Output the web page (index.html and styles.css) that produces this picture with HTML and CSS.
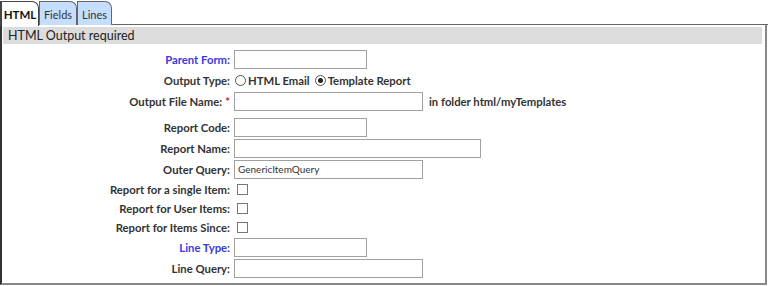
FILE: index.html
```html
<!DOCTYPE html>
<html>
<head>
<meta charset="utf-8">
<link rel="stylesheet" href="styles.css">
</head>
<body>
<div class="tabs">
  <div class="tab active">HTML</div>
  <div class="tab">Fields</div>
  <div class="tab">Lines</div>
</div>
<div class="panel">
  <div class="panel-head">HTML Output required</div>
  <div class="form">
    <label class="lbl blue">Parent Form:</label>
    <div class="fld"><span class="inp w132"></span></div>

    <label class="lbl">Output Type:</label>
    <div class="fld radios">
      <span class="radio"></span><span class="rtext">HTML Email</span>
      <span class="radio on"></span><span class="rtext">Template Report</span>
    </div>

    <label class="lbl">Output File Name: <span class="req">*</span></label>
    <div class="fld"><span class="inp w188"></span><span class="note">in folder html/myTemplates</span></div>

    <div class="spacer"></div><div class="spacer"></div>

    <label class="lbl">Report Code:</label>
    <div class="fld"><span class="inp w132"></span></div>

    <label class="lbl">Report Name:</label>
    <div class="fld"><span class="inp w246"></span></div>

    <label class="lbl">Outer Query:</label>
    <div class="fld"><span class="inp w188 val">GenericItemQuery</span></div>

    <label class="lbl">Report for a single Item:</label>
    <div class="fld chk-row"><span class="chk"></span></div>

    <label class="lbl">Report for User Items:</label>
    <div class="fld chk-row"><span class="chk"></span></div>

    <label class="lbl">Report for Items Since:</label>
    <div class="fld chk-row"><span class="chk"></span></div>

    <label class="lbl blue">Line Type:</label>
    <div class="fld"><span class="inp w132"></span></div>

    <label class="lbl">Line Query:</label>
    <div class="fld"><span class="inp w188"></span></div>
  </div>
</div>
</body>
</html>
```
FILE: styles.css
```css
html, body {
  margin: 0;
  padding: 0;
  background: #fff;
}
body {
  font-family: Lato, "Open Sans", sans-serif;
  color: #333;
  width: 768px;
  height: 286px;
  overflow: hidden;
}
.tabs {
  display: flex;
  height: 25px;
  padding-top: 1px;
  box-sizing: border-box;
  border-bottom: 1px solid #666;
}
.tab {
  box-sizing: border-box;
  height: 24px;
  padding: 0;
  text-align: center;
  border: 1px solid #666;
  border-bottom: none;
  border-radius: 0 7px 0 0;
  background: #c6defd;
  font-size: 11px;
  line-height: 25px;
  color: #333;
}
.tab.active {
  background: #fff;
  font-weight: bold;
  color: #111;
  height: 25px;
  margin-bottom: -1px;
  width: 39px;
  border-color: #444;
  border-left-width: 2px;
  font-size: 11.5px;
}
.tab:nth-child(2) { width: 38px; }
.tab:nth-child(3) { width: 35px; }
.panel {
  box-sizing: border-box;
  width: 767px;
  height: 260px;
  border-left: 2px solid #333;
  border-right: 2px solid #888;
  border-bottom: 2px solid #888;
  padding: 2px 2px 0 1px;
}
.panel-head {
  background: #dcdcdc;
  height: 17px;
  line-height: 17px;
  font-size: 12.5px;
  padding-left: 5px;
  color: #222;
  margin-right: 1px;
}
.form {
  display: grid;
  grid-template-columns: 227px 1fr;
  column-gap: 4px;
  padding-top: 5px;
}
.lbl {
  text-align: right;
  font-weight: bold;
  font-size: 11.3px;
  color: #333;
  display: flex;
  align-items: center;
  justify-content: flex-end;
  white-space: nowrap;
}
.lbl.blue { color: #3a3ae0; }
.req { color: #e02020; margin-left: 3px; }
.fld {
  display: flex;
  align-items: center;
  height: 21px;
}
.chk-row { height: 19px; }
.spacer { height: 5px; }
.inp {
  box-sizing: border-box;
  display: inline-block;
  height: 19px;
  border: 1px solid #a0a0a0;
  background: #fff;
  font-size: 10px;
  line-height: 17px;
  padding-left: 3px;
  color: #333;
}
.w132 { width: 133px; }
.w188 { width: 189px; }
.w246 { width: 247px; }
.note {
  font-weight: bold;
  font-size: 11.3px;
  margin-left: 6px;
}
.radios { gap: 0; }
.radio {
  box-sizing: border-box;
  width: 11px;
  height: 11px;
  border: 1px solid #555;
  border-radius: 50%;
  margin: 0 2px 0 1px;
  position: relative;
}
.radio.on::after {
  content: "";
  position: absolute;
  left: 2px;
  top: 2px;
  width: 5px;
  height: 5px;
  border-radius: 50%;
  background: #222;
}
.rtext {
  font-weight: bold;
  font-size: 11.3px;
  margin-right: 4px;
}
.chk {
  box-sizing: border-box;
  width: 11px;
  height: 11px;
  border: 1px solid #777;
  margin-left: 3px;
  background: #fff;
}
```
